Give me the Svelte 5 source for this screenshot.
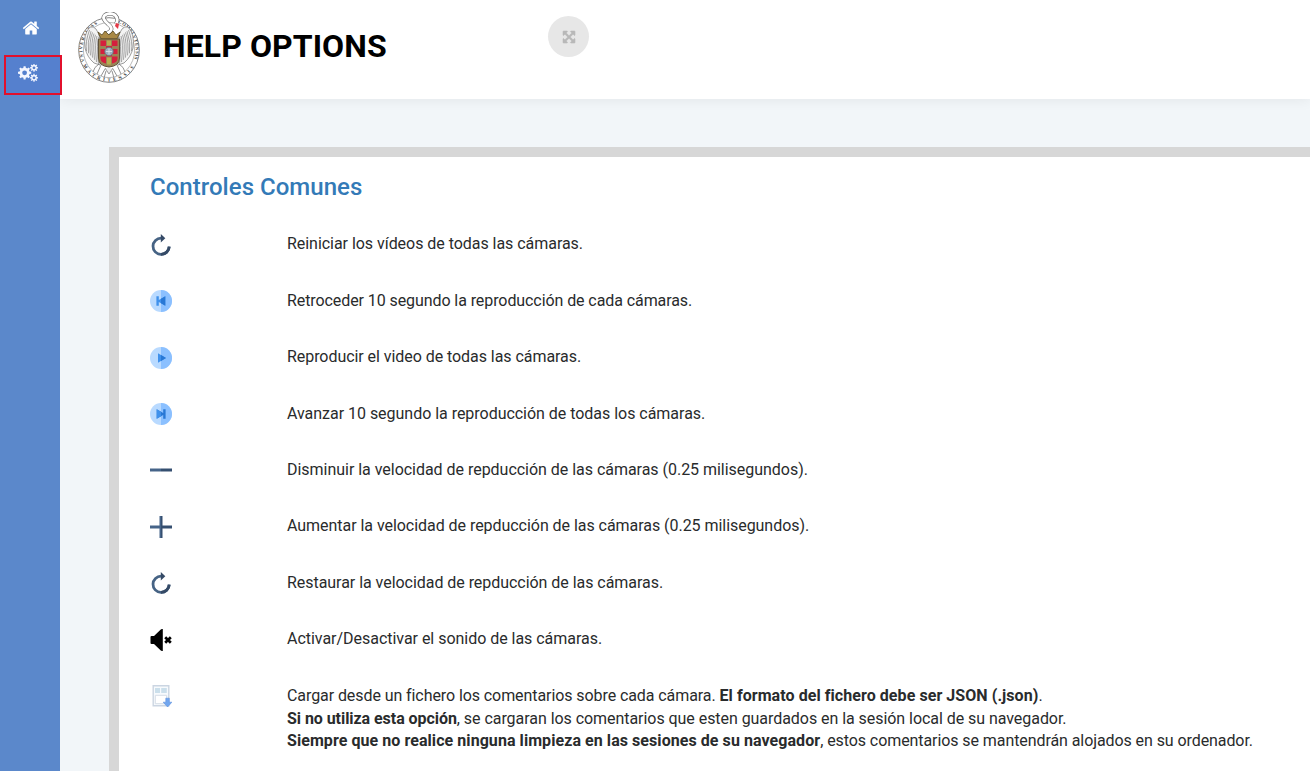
<script>
  const gear = (cx, cy, outer, inner, hole, teeth) => {
    const points = [];
    for (let i = 0; i < teeth; i++) {
      const step = (Math.PI * 2) / teeth;
      for (const [offset, radius] of [[-0.3, inner], [-0.19, outer], [0.19, outer], [0.3, inner]]) {
        const angle = (i + offset) * step;
        points.push(`${(cx + radius * Math.cos(angle)).toFixed(2)} ${(cy + radius * Math.sin(angle)).toFixed(2)}`);
      }
    }
    return `M${points.join('L')}ZM${cx - hole} ${cy}a${hole} ${hole} 0 1 0 ${2 * hole} 0a${hole} ${hole} 0 1 0 ${-2 * hole} 0Z`;
  };

  const feathers = [0, 1, 2, 3, 4, 5, 6];

  const controls = [
    { icon: 'reload', tracking: -0.04, text: 'Reiniciar los vídeos de todas las cámaras.' },
    { icon: 'back', tracking: -0.083, text: 'Retroceder 10 segundo la reproducción de cada cámaras.' },
    { icon: 'play', tracking: -0.055, text: 'Reproducir el video de todas las cámaras.' },
    { icon: 'forward', tracking: -0.028, text: 'Avanzar 10 segundo la reproducción de todas los cámaras.' },
    { icon: 'minus', tracking: -0.028, text: 'Disminuir la velocidad de repducción de las cámaras (0.25 milisegundos).' },
    { icon: 'plus', tracking: -0.044, text: 'Aumentar la velocidad de repducción de las cámaras (0.25 milisegundos).' },
    { icon: 'reload', tracking: -0.042, text: 'Restaurar la velocidad de repducción de las cámaras.' },
    { icon: 'mute', tracking: -0.03, text: 'Activar/Desactivar el sonido de las cámaras.' },
    { icon: 'file', tracking: -0.08, text: '' }
  ];
</script>

{#snippet icon(name)}
  <svg class="icon" viewBox="0 0 22 22" aria-hidden="true">
    {#if name === 'reload'}
      <path d="M11.2 4.2A8.1 8.1 0 1 0 19.2 12.6" fill="none" stroke="#466384" stroke-width="2.8" />
      <path d="M11 20.3a8.1 8.1 0 0 0 8.2-7.7" fill="none" stroke="#354a66" stroke-width="2.8" />
      <path d="M10.8 0 15.3 4.3 10.8 8.5Z" fill="#354a66" />
    {:else if name === 'minus' || name === 'plus'}
      <path d="M0 9.5h11v3H0z" fill="#466489" />
      <path d="M11 9.5h11v3H11z" fill="#354f70" />
      {#if name === 'plus'}
        <path d="M9.5 0H11v22H9.5z" fill="#466489" />
        <path d="M11 0h1.5v22H11z" fill="#354f70" />
      {/if}
    {:else if name === 'mute'}
      <path d="M.5 8q0-1 1-1H4L10.5.7Q11.2 0 12 0h.8v22H12q-.8 0-1.5-.7L4 15H1.5q-1 0-1-1z" fill="#000" />
      <path d="m15.2 8.2 5.6 5.6m0-5.6-5.6 5.6" stroke="#000" stroke-width="2.7" />
    {:else if name === 'file'}
      <path d="M3.2.7h15.6v20H3.2z" fill="#f7fafd" stroke="#cbd5e2" stroke-width="1.4" />
      <path d="M5 3h5v5H5zm6.2 0h5.6v5h-5.6z" fill="#cbdfeb" />
      <path d="M5.3 10.3h11.4v8.4H5.3z" fill="#fff" stroke="#d5dde6" stroke-width="1" />
      <path d="M15.8 13.2h3.5v4h2.6L17.6 22l-4.4-4.8h2.6z" fill="#71a6ee" stroke="#5c91df" stroke-width=".6" />
    {:else}
      <circle cx="11" cy="11" r="11" fill="#b9daff" />
      <path d="M11 0a11 11 0 0 1 0 22z" fill="#8bc0ff" />
      {#if name === 'play'}
        <path d="M8 6.2 16 11l-8 4.8z" fill="#3f91ec" />
        <path d="m11 8 5 3-5 3z" fill="#2878d5" />
      {:else if name === 'back'}
        <path d="M6.4 6.2h2.4v3.9L15.3 6.2v9.6l-6.5-3.9v3.9H6.4z" fill="#3f91ec" />
        <path d="m11 8.8 4.3-2.6v9.6L11 13.2z" fill="#2878d5" />
      {:else}
        <path d="M15.6 6.2h-2.4v3.9L6.7 6.2v9.6l6.5-3.9v3.9h2.4z" fill="#2878d5" />
        <path d="M6.7 6.2 11 8.8v4.4l-4.3 2.6z" fill="#3f91ec" />
      {/if}
    {/if}
  </svg>
{/snippet}

<div class="app">
  <nav class="sidebar">
    <a class="home" href="#home" aria-label="Inicio">
      <svg viewBox="0 0 1792 1792" width="18" height="18"><path fill="#fff" d="M1472 992v480q0 26-19 45t-45 19h-384v-384h-256v384h-384q-26 0-45-19t-19-45v-480q0-1 .5-3t.5-3l575-474 575 474q1 2 1 6zm223-69l-62 74q-8 9-21 11h-3q-13 0-21-7l-692-577-692 577q-12 8-24 7-13-2-21-11l-62-74q-8-10-7-23.5t11-21.5l719-599q32-26 76-26t76 26l244 204v-195q0-14 9-23t23-9h192q14 0 23 9t9 23v408l219 182q10 8 11 21.5t-7 23.5z" /></svg>
    </a>
    <a class="settings" href="#settings" aria-label="Opciones">
      <svg viewBox="0 0 20 18" width="20" height="18">
        <g fill="#f3f5ff" fill-rule="evenodd">
          <path d={gear(6.6, 8.8, 6.7, 5.1, 2.4, 8)} />
          <path d={gear(16, 3.8, 4, 2.9, 1.4, 8)} />
          <path d={gear(16, 13.8, 4, 2.9, 1.4, 8)} />
        </g>
      </svg>
    </a>
  </nav>

  <div class="page">
    <header>
      <svg class="crest" viewBox="0 0 62 72" width="62" height="72" role="img" aria-label="Universitas Complutensis Matritensis">
        <defs>
          <path id="ring-left" d="M6.9 50.2A26.6 28.8 0 0 1 22.8 10.6" />
          <path id="ring-right" d="M39.2 10.6A26.6 28.8 0 0 1 55.1 50.2" />
          <path id="ring-bottom" d="M4.2 51.4A29.6 31.6 0 0 0 57.8 51.4" />
        </defs>
        <ellipse cx="31" cy="38" rx="30.3" ry="32.3" fill="#fff" stroke="#777" stroke-width=".9" />
        <ellipse cx="31" cy="38" rx="25.6" ry="27.6" fill="#fff" stroke="#8b8b8b" stroke-width=".6" />
        <g class="motto">
          <text><textPath href="#ring-left" startOffset="1" textLength="43">VNIVERSITAS</textPath></text>
          <text><textPath href="#ring-right" startOffset="1" textLength="43">COMPLVTENSIS</textPath></text>
          <text><textPath href="#ring-bottom" startOffset="2" textLength="62">MATRITENSIS</textPath></text>
        </g>
        {#each [1, -1] as side}
          <g transform={side === 1 ? undefined : 'translate(62 0) scale(-1 1)'}>
            <path d="M22 27Q19 13 12 15 5 22 7 36q2 9 9 15l6 2z" fill="#f4f4f4" stroke="#777" stroke-width=".7" />
            {#each feathers as n}
              <path d="M{11.5 + n * 1.5} {18 + n * 1.2}Q{7 + n * 1.9} 30 {8.5 + n * 2} {39 + n * 2.2}" fill="none" stroke="#777" stroke-width=".65" />
            {/each}
            <path d="M21 52q-5 3-6 8m8-7-4 9m8-5-4 7m5-5-2 7" fill="none" stroke="#777" stroke-width=".8" />
          </g>
        {/each}
        <path d="M27 22Q38 18 30 12 23 6 27 3q5-3 10 0 4 4 1 9" fill="none" stroke="#555" stroke-width="4" />
        <path d="M27 22Q38 18 30 12 23 6 27 3q5-3 10 0 4 4 1 9" fill="none" stroke="#fff" stroke-width="2.9" />
        <path d="m38 11 3 1-1 5-3-3z" fill="#e43a48" />
        <path d="m20 20 4 3 3-4 4 4 4-4 3 4 4-3-3 7H23z" fill="#a98945" stroke="#574821" stroke-width=".8" />
        <path d="M20.5 27h21v19q0 8-10.5 9-10.5-1-10.5-9z" fill="#9a8455" stroke="#615238" stroke-width="1" />
        <path d="M22.5 28.5h5.5v5.5h-5.5zm11.500 0h5.500v5.500h-5.500zM22.500 44.500h5.500v7q-5.500-1-5.500-5zm11.500 0h5.500v2q0 4-5.500 5zM28 34h6v10.500h-6zM22.500 37h5v5h-5zm12 0h5v5h-5z" fill="#d51f3d" />
        <path d="M29 28.500h4v5h-4zm0 17h4v7h-4z" fill="#b8ad51" />
        <circle cx="31" cy="39.500" r="4.300" fill="#9aacbb" stroke="#5e6e7b" stroke-width=".8" />
        <path d="M28 39.500h6m-3-3v6" stroke="#d4dce3" stroke-width="1" />
        <path d="m27 56 4 6 4-6" fill="#eee" stroke="#777" stroke-width=".7" />
      </svg>
      <h1>HELP OPTIONS</h1>
      <button aria-label="Pantalla completa">
        <svg viewBox="0 0 1792 1792" width="14" height="14"><path fill="#b8b8b8" stroke="#b8b8b8" stroke-width="70" d="M1411 541l-355 355 355 355 144-144q29-31 70-14 39 17 39 59v448q0 26-19 45t-45 19h-448q-42 0-59-40-17-39 14-69l144-144-355-355-355 355 144 144q31 30 14 69-17 40-59 40h-448q-26 0-45-19t-19-45v-448q0-42 40-59 39-17 69 14l144 144 355-355-355-355-144 144q-19 19-45 19-12 0-24-5-40-17-40-59v-448q0-26 19-45t45-19h448q42 0 59 40 17 39-14 69l-144 144 355 355 355-355-144-144q-31-30-14-69 17-40 59-40h448q26 0 45 19t19 45v448q0 42-39 59-13 5-25 5-26 0-45-19z" /></svg>
      </button>
    </header>
    <main>
      <section>
        <h2>Controles Comunes</h2>
        {#each controls as control}
          <div class="row">
            {@render icon(control.icon)}
            <p style:letter-spacing="{control.tracking}px">
              {#if control.icon === 'file'}
                Cargar desde un fichero los comentarios sobre cada cámara. <b>El formato del fichero debe ser JSON (.json)</b>.<br /><span><b class="tight">Si no utiliza esta opción</b>, se cargaran los comentarios que esten guardados en la sesión local de su navegador.</span><br /><b>Siempre que no realice ninguna limpieza en las sesiones de su navegador</b>, estos comentarios se mantendrán alojados en su ordenador.
              {:else}
                {control.text}
              {/if}
            </p>
          </div>
        {/each}
      </section>
    </main>
  </div>
</div>

<style>
  .app {
    display: flex;
    height: 771px;
    overflow: hidden;
    font-family: Roboto, sans-serif;
    font-size: 16px;
    line-height: 22.857px;
    color: #292b2c;
    background: #f2f6f9;
  }
  .sidebar {
    position: relative;
    z-index: 2;
    flex: 0 0 60px;
    background: #5b88cb;
  }
  .home {
    display: flex;
    justify-content: center;
    padding: 19px 0 0 1px;
  }
  .settings {
    position: absolute;
    left: 4px;
    top: 55px;
    box-sizing: border-box;
    width: 58px;
    height: 40px;
    padding: 7px 0 0 12px;
    border: 2px solid #e2102c;
    background: linear-gradient(90deg, #5580ce 54px, #fff 54px);
  }
  svg { display: block; }
  .page {
    flex: 1;
    min-width: 0;
    display: flex;
    flex-direction: column;
  }
  header {
    position: relative;
    flex: 0 0 99px;
    box-sizing: border-box;
    display: flex;
    align-items: flex-start;
    padding: 12px 0 0 18px;
    background: #fff;
    box-shadow: 0 2px 12px rgba(0, 0, 0, 0.06);
  }
  .crest { flex: none; }
  .motto text {
    font: bold 4.6px "Liberation Serif", serif;
    fill: #333;
  }
  h1 {
    width: 385px;
    margin: 15px 0 0 23px;
    font-size: 32px;
    line-height: 38px;
    font-weight: 700;
    letter-spacing: 0.08px;
    color: #000;
  }
  button {
    display: grid;
    place-items: center;
    width: 41px;
    height: 41px;
    margin: 4px 0 0;
    padding: 0;
    border: 0;
    border-radius: 50%;
    background: #e7e7e7;
  }
  main {
    flex: 1;
    padding: 48px 0 0 49px;
  }
  section {
    box-sizing: border-box;
    height: 640px;
    padding: 17px 0 0 31px;
    border: solid #d7d7d7;
    border-width: 10px 0 0 10px;
    background: #fff;
  }
  h2 {
    margin: 0 0 33px;
    font-size: 24px;
    line-height: 26px;
    font-weight: 500;
    letter-spacing: 0.03px;
    color: #337ab7;
  }
  .row {
    display: grid;
    grid-template-columns: 137px 1fr;
    min-height: 56.43px;
  }
  .icon {
    width: 22px;
    height: 22px;
    margin-top: 0.75px;
  }
  p {
    margin: 0.3px 0 0;
    white-space: nowrap;
  }
  span { letter-spacing: -0.05px; }
  b {
    font-weight: 700;
    letter-spacing: 0.064px;
  }
  .tight { letter-spacing: -0.055px; }
</style>
